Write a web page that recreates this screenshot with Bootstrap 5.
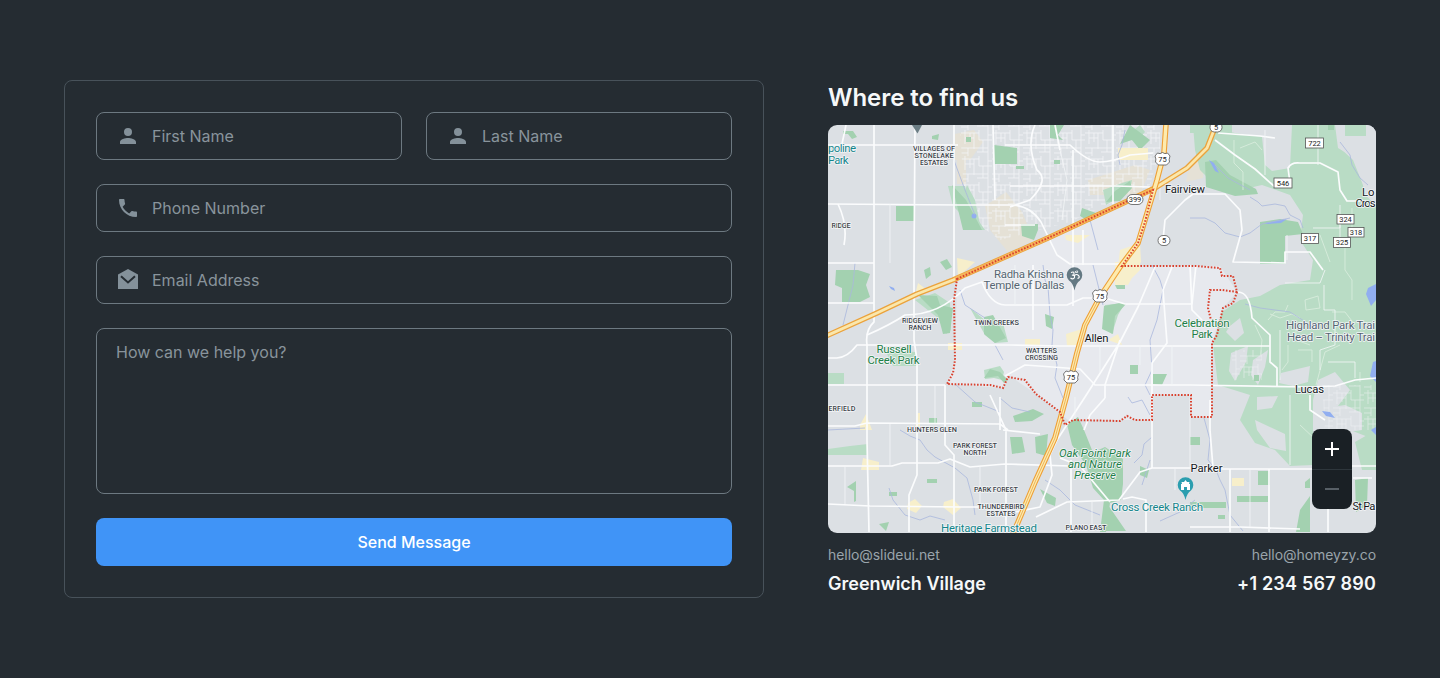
<!DOCTYPE html>
<html lang="en">
<head>
<meta charset="utf-8">
<meta name="viewport" content="width=device-width, initial-scale=1">
<title>Contact</title>
<link href="https://cdn.jsdelivr.net/npm/bootstrap@5.3.0/dist/css/bootstrap.min.css" rel="stylesheet">
<style>
body{background:#252c32;color:#f6f8f9;font-family:Inter,"Liberation Sans",sans-serif;font-size:16px;line-height:24px}
.contact-wrap{padding:80px 64px;gap:64px}
.contact-form{width:700px;height:518px;padding:31px;border:1px solid #48525a;border-radius:8px;gap:24px}
.field{height:48px;border:1px solid #6d7981;border-radius:8px;padding:0 19px;gap:12px}
.field svg{width:24px;height:24px;fill:#84919a;flex:none}
.form-control,.form-control:focus{background:transparent;border:0;border-radius:0;box-shadow:none;color:#f6f8f9;padding:0;font-size:16px;line-height:24px}
.form-control::placeholder{color:#89949c;opacity:1}
textarea.form-control,textarea.form-control:focus{height:166px;border:1px solid #6d7981;border-radius:8px;padding:11px 19px;resize:none}
.btn-send,.btn-send:hover{height:48px;background:#4094f7;color:#fff;border:0;border-radius:8px;font-weight:500;font-size:16px}
.place{width:548px}
.place h1{font-size:24px;line-height:36px;font-weight:600;letter-spacing:-.04px;margin:0 0 9px}
.map-frame{height:408px;border-radius:9px;overflow:hidden}
.map-frame svg.map{display:block;width:548px;height:408px}
.zoom-box{position:absolute;right:24px;bottom:24px;width:40px;height:80px;border-radius:8px;background:#1a2025;overflow:hidden}
.zoom-box button{height:40px;width:40px;background:none;border:0;padding:0}
.zoom-box button+button{box-shadow:inset 0 1px #2e363c}
.mail{font-size:14px;line-height:20px;letter-spacing:-.06px;color:#9aa4ab;margin-top:12px}
.strong-line{font-size:18px;line-height:28px;font-weight:600;margin-top:5px}
.tel{letter-spacing:.2px}
/* map drawing */
.map text{font-family:Roboto,"Liberation Sans",sans-serif;paint-order:stroke;stroke:#f3f5f7;stroke-width:1.6px;stroke-linejoin:round;text-anchor:middle}
.hood{font-size:7.3px;font-weight:500;fill:#3d434a}
.town{font-size:11.3px;fill:#15181b;font-weight:400}
.park{font-size:11.5px;fill:#1e8049}
.teal{font-size:11.5px;fill:#14858b}
.poi{font-size:11.5px;fill:#566572}
.map .shield text{font-size:7.5px;font-weight:400;fill:#222;stroke:none}
.shield rect{fill:#fff;stroke:#555;stroke-width:.8}
.g1{fill:#b9dcc5}.g2{fill:#a3d1b0}
.road{fill:none;stroke:#fbfcfd;stroke-width:1.7;stroke-linejoin:round}
.lane{fill:none;stroke:#f4f6f8;stroke-width:.8}
.trail{fill:none;stroke:#d8ecdd;stroke-width:.9;stroke-linejoin:round}
.creek{fill:none;stroke:#a9b7dd;stroke-width:.8;stroke-linejoin:round}
.edge{fill:none;stroke:#d9412e;stroke-width:2;stroke-dasharray:1.6 1.6}
</style>
</head>
<body>
<main class="contact-wrap d-flex align-items-start">
  <form class="contact-form d-flex flex-column">
    <div class="d-flex gap-4">
      <div class="field d-flex align-items-center flex-fill">
        <svg viewBox="0 0 24 24"><path d="M12 12a4 4 0 1 0 0-8 4 4 0 0 0 0 8zm0 2c-2.670 0-8 1.340-8 4v2h16v-2c0-2.660-5.330-4-8-4z"/></svg>
        <input class="form-control" placeholder="First Name" aria-label="First Name">
      </div>
      <div class="field d-flex align-items-center flex-fill">
        <svg viewBox="0 0 24 24"><path d="M12 12a4 4 0 1 0 0-8 4 4 0 0 0 0 8zm0 2c-2.670 0-8 1.340-8 4v2h16v-2c0-2.660-5.330-4-8-4z"/></svg>
        <input class="form-control" placeholder="Last Name" aria-label="Last Name">
      </div>
    </div>
    <div class="field d-flex align-items-center">
      <svg viewBox="0 0 24 24"><path d="M6.620 10.790c1.440 2.830 3.760 5.140 6.590 6.590l2.200-2.200c.27-.27.67-.36 1.020-.24 1.120.37 2.330.57 3.570.57.55 0 1 .45 1 1V20c0 .55-.45 1-1 1-9.390 0-17-7.610-17-17 0-.55.45-1 1-1h3.500c.55 0 1 .45 1 1 0 1.250.2 2.450.57 3.570.11.35.03.74-.25 1.020l-2.200 2.200z"/></svg>
      <input class="form-control" placeholder="Phone Number" aria-label="Phone Number">
    </div>
    <div class="field d-flex align-items-center">
      <svg viewBox="0 0 24 24"><path d="M2 6.500 12 1l10 5.500V21H2z"/><path d="m5 8.200 7 6.200 7-6.200" fill="none" stroke="#252c32" stroke-width="2"/></svg>
      <input class="form-control" placeholder="Email Address" aria-label="Email Address">
    </div>
    <textarea class="form-control" placeholder="How can we help you?" aria-label="Message"></textarea>
    <button type="button" class="btn btn-send w-100">Send Message</button>
  </form>

  <section class="place">
    <h1>Where to find us</h1>
    <div class="map-frame position-relative">
      <svg class="map" viewBox="828 125 548 408">
        <defs>
          <pattern id="streets" width="31" height="26" patternUnits="userSpaceOnUse"><path d="M0 3h18M4 0v14M9 3v9M13 3v16M4 8h9M18 0v10h13M22 10v12M27 0v26M0 18h27M7 18v8M16 22h11M0 23h7M27 5h4" fill="none" stroke="#f3f4f6" stroke-width=".8"/></pattern>
        </defs>
        <rect x="828" y="125" width="548" height="408" fill="#dce0e4"/>
        <path fill="#e7e9ee" d="M957 279 1153 190 1140 240 1122 266H1220L1237 292 1223 308 1212 343V417H1191V395H1152V420H1068L1036 394 1010 376 1003 388 947 384 955 360z"/>
        <path fill="#e5e1d6" d="M955 134 974 130 983 142 970 160 955 160zM957 160H966V184H957zM985 206 1006 192 1022 212 1034 240 1008 252 990 230zM1088 180 1135 165 1150 170 1140 195 1090 195zM1190 160 1206 150 1203 178 1186 182z"/>
        <path fill="url(#streets)" d="M960 125H1160V150L1150 185 1070 222 1000 240 965 215z"/>
        <path class="g1" d="M1193 125 1235 133 1262 137 1265 165 1272 171 1290 168 1292 125H1335L1338 148 1358 160 1365 195 1376 205V440L1350 430 1335 410 1350 390 1335 372 1318 380 1313 400V465L1290 466 1275 450 1255 443 1240 420 1250 395 1218 385 1213 345 1222 312 1240 300 1260 296 1280 285 1310 280 1313 260 1300 240 1303 215 1290 195 1262 185 1240 190 1215 185 1200 170 1195 150z"/>
        <path class="g2" d="M1205 162 1216 160 1230 175 1256 189 1258 194 1235 196 1206 187zM1260 222 1280 219 1298 222 1303 234 1285 236V262H1260zM1260 260H1285V264H1260z"/>
        <path class="trail" d="M1234 140V163L1243 172V190M1240 148 1255 142 1262 150M1270 314 1280 318 1292 314 1300 318M1268 320 1275 312H1285L1288 305M1305 300 1318 296 1320 308 1306 310zM1288 345V362L1282 370M1298 350H1312V362M1316 385 1325 352 1340 345M1332 312H1345L1355 325M1300 425 1316 440V455M1313 330 1320 322M1345 238V270L1352 280V300M1320 235 1330 262M1296 325V340L1310 345M1255 325 1262 340 1260 360M1360 372V382M1352 208V230"/>
        <path fill="#dce0e4" d="M1230 326 1240 318 1244 333 1235 341 1226 332zM1231 353 1248 346 1246 362 1235 381 1229 371zM1253 360 1268 350 1265 367 1258 385 1251 375zM1281 373 1310 366 1308 382 1293 386 1279 383zM1255 420 1285 434 1286 451 1270 448 1257 430zM1257 397 1278 396 1272 408 1257 410zM1325 408 1345 405 1362 413 1362 430 1330 435zM1340 125H1376V195L1365 190 1353 160 1340 148z"/>
        <path fill="url(#streets)" opacity=".6" d="M1322 385H1376V430H1325zM1232 350H1262V380H1232z"/>
        <g class="g1">
          <path d="M948 186 965 186 970 207 978 220 985 230H970L962 215 953 206z"/>
          <path d="M967 185 975 200 980 225 975 230 962 200zM915 300 935 293 950 303 951 330 946 334 938 318zM885 350 915 352 918 366H893zM1105 305 1125 303 1118 315 1112 334 1103 328zM1103 190 1125 182 1132 180 1130 190 1106 205zM1140 125 1145 132 1136 142 1125 137zM1190 125H1232V133H1190z"/>
          <path d="M828 449 850 446 868 444V455H828zM828 373H844V384H828zM984 370 1000 366 1004 372 1002 380 994 378 985 379zM1345 125H1366V136H1345zM1355 442 1376 430V470H1362z"/>
          <path d="M970 308 985 320 990 325 1003 323 1008 342 995 343 985 335z"/>
        </g>
        <g class="g2">
          <path d="M836 270 858 270 870 274 866 285 870 297 860 302H842V288L835 285zM896 206H914V221H896zM918 295 937 296 940 305 953 308 950 333 943 334 938 315zM963 230 952 185 966 200 982 230zM994 145 1017 148V164H994z"/>
          <path d="M1067 424 1078 417 1084 430 1092 450 1094 452 1105 447 1123 459V484L1121 500 1110 503 1106 532H1100L1104 500 1093 488 1086 465 1072 445zM1106 502 1126 531H1102z"/>
          <path d="M1104 306 1120 303 1126 304 1115 316 1113 334 1102 329zM984 317 993 315 1006 338 995 343 984 334zM1115 191 1130 181 1132 188 1120 201 1106 202zM1010 437H1022L1025 452 1012 454zM1035 437 1048 434 1046 456 1036 453zM1013 416 1033 409 1044 414 1032 421 1015 422zM1000 372 990 369 984 378 998 376 1004 383 1008 380zM1050 125H1064L1058 135 1063 140 1050 138zM1021 224H1038V230L1034 240 1022 236zM1130 125 1150 140 1140 150 1132 140 1120 144zM1082 208 1096 213 1090 222 1080 216zM1130 365H1138V374H1130zM1153 374 1167 374 1162 385 1153 384zM847 487 856 481V501L854 502V491zM879 524 889 522 886 531zM1190 437H1200V445H1190zM1258 471H1270V485H1258zM1237 496H1268V502H1237zM1190 502H1226V508H1190zM1300 510 1310 496V532H1296zM1355 480 1368 478 1367 505 1356 512z"/>
          <path d="M843 131h10l4 6-5 2-4-5h-5zM932 136l7-2-1 6-6-1zM924 270l6-3 1 8-5 4zM940 262l7-3 5 8-6 3zM929 418h8v5h-8zM927 479h10v4h-10zM889 492h8v4h-8zM972 402h10v5h-10zM1045 314l9 3-2 12-6-3zM1140 466l9 4-2 8-7-3zM1040 489l16 9-1 8-8-3zM1218 515h7v4h-7zM966 137h5v5h-5zM1115 285h10v4h-8zM1254 375h5v6h-5zM1016 166h8v3h-8zM1054 160h6v4h-6zM1305 482l5-4v10h-5zM1328 125h6v5h-6z"/>
        </g>
        <path fill="#f7efcb" d="M1120 250 1140 243 1141 262 1128 285 1116 283zM1115 262H1140V270L1125 285H1115zM1066 334 1085 328 1082 345 1067 346zM1118 334 1122 345 1108 340zM1025 339H1040V346H1025zM1065 235H1090L1078 243 1066 240zM1120 250H1140V268H1120zM860 425 866 414 872 430H860zM863 458 879 462V470H861zM908 503 915 499 922 506 916 513 907 509zM944 502 953 499 961 508 953 515 943 507zM957 258 975 262 958 277zM1232 478H1244V486H1232zM948 343H962V350H948zM918 283 927 290 915 295zM1118 148H1148V160H1118zM917 413H920V430H915z"/>
        <g fill="#91aef0"><circle cx="974" cy="216" r="2.500"/><path d="M1368 288 1376 284V300L1371 306 1366 294zM1370 376 1373 362 1376 361V382zM1322 411l8 1 5 6-9-2zM1265 223l22-4-6 4-14 1zM1209 160l5 3 5 10-4-2zM889 286l5 2 1 3-4-2zM1371 430l5-3v8z"/></g>
        <path class="creek" d="M855 263 853 285 843 325M828 430 865 428M900 430 910 436 920 440 927 450 935 457 955 468 967 478 973 500 975 515M889 488 893 500 905 515 920 520 930 516 945 520M1043 265 1045 280 1048 287 1050 315 1053 330 1052 345 1057 365 1055 378 1063 398M1093 265 1103 305M1128 397 1132 403 1142 400 1150 415M1152 437 1144 444 1142 455 1134 463M1152 265 1160 280 1163 290 1157 320 1150 340 1152 370 1145 385 1150 395M1190 218 1205 218 1215 223 1225 233 1240 237 1250 233 1262 224 1290 218M1250 197 1258 202 1262 206 1275 204 1285 206 1290 215 1300 220 1303 228M1204 418 1210 440 1208 460 1216 470 1220 480 1225 490 1230 515 1243 531M952 155 965 190 975 215M1125 130 1122 145 1118 155 1120 165M1090 220 1098 250M960 290 965 305 985 318M995 345 1003 360M1150 460 1142 485M1045 480 1060 490 1075 505 1100 515M1245 304 1260 308 1290 312 1312 326M1340 142 1350 155 1352 165 1360 178 1368 185M1195 500 1180 512 1160 521M1215 165 1228 178 1250 190M1000 398 1012 408 1030 412M955 384 975 402 1000 412"/>
        <g class="road">
          <path d="M828 145H958M1005 145H1070Q1088 162 1100 162T1130 155L1153 153M828 204 960 205H1010Q1030 205 1041 222L1057 255 1070 264H1122M828 263H874M828 303H874M1010 186H1115L1150 187M1005 225H1035"/>
          <path d="M828 358H837Q848 357 857 345H1010L1060 346H1270M828 385H945M1005 376 1025 365 1080 369 1095 385H1190L1310 387 1335 386 1355 380 1376 378"/>
          <path d="M828 426H855L867 423 1000 424 1008 430M828 466H892L902 463H938L950 459 970 467 1005 464 1070 466M828 504 870 506 960 507 1000 507"/>
          <path d="M874 125V322Q865 330 867 345V440L869 532M915 125 914 265V340L917 360V475L909 495V532M954 125V280M945 385V445L954 455V532M993 125 995 200"/>
          <path d="M846 125 842 144M838 204Q848 225 844 245M867 335Q890 325 905 315 940 315 965 288L982 282Q990 304 1005 305M1005 305H1067L1083 298H1105L1125 304H1192L1196 265M1033 265V330M1073 150V306M1083 230V265M1113 125V204"/>
          <path d="M1155 267 1138 307 1120 342 1085 397 1057 440 1050 455 1052 475 1040 507 1000 515M1172 267 1163 290 1167 343 1152 363V468H1200M1152 468 1140 472 1119 500 1067 502 1036 517M1110 502 1080 466 1060 458M1071 460V532M1084 430 1090 415 1105 398M1105 398V385L1120 340"/>
          <path d="M1000 397V430M990 395 1006 430V532M1055 125 1060 150M1035 125Q1026 145 1037 170 1050 180 1030 200L1010 207M1003 430 1040 434M1123 499 1132 497 1146 500V532"/>
          <path d="M1163 240 1165 220 1185 200 1193 194H1225L1240 210 1242 230 1233 262 1285 263V252H1310L1323 270M1215 140 1235 155 1255 169 1275 187M1290 183 1288 168Q1291 162 1300 163H1320L1338 172 1340 190 1347 201H1360M1218 133 1260 136 1275 138"/>
          <path d="M1190 265 1192 310 1202 320M1238 292Q1250 292 1252 318L1270 335V362L1277 368V387M1312 466H1376M1200 469H1312M1230 469V532M1269 469V532M1190 527H1240L1300 529M1328 509V532M1210 400V430L1213 468M1353 478H1372M1310 395V410L1325 420"/>
        </g>
        <g class="lane"><path d="M1265 130V175M1318 125V165M1340 237V205M1313 228H1340V222M1287 235V260M1285 283H1320L1325 270M1324 285V310H1335V345L1320 350V370M1328 362H1355V378M1290 395V465M1280 330V380M1160 180V200M1075 397V420M1060 150 1067 180 1062 220M890 204V263M845 466V504M1172 345V385M1190 395V469M935 385V424M890 424V466M1100 346V372M980 466V507M1015 265V305M1175 469V490M1092 502V525M1250 469V527M1140 345V365"/></g>
        <g fill="none" stroke-linejoin="round">
          <path d="M826 336 877 313 917 294 953 280 1005 257 1048 238 1132 199 1155 188 1187 168 1207 148 1216 125" stroke="#eba23b" stroke-width="5.400"/>
          <path d="M826 336 877 313 917 294 953 280 1005 257 1048 238 1132 199 1155 188 1187 168 1207 148 1216 125" stroke="#fae7ac" stroke-width="2.800"/>
          <path d="M955 279 1005 257 1048 238 1132 199 1152 190" stroke="#f5b45b" stroke-width="4"/>
          <path d="M1166 124 1164 153 1157 180 1152 197 1145 220 1138 243 1120 267 1100 297 1085 325 1077 353 1066 398 1055 438 1035 482 1013 534" stroke="#ee9f35" stroke-width="5.600"/>
          <path d="M1166 124 1164 153 1157 180 1152 197 1145 220 1138 243 1120 267 1100 297 1085 325 1077 353 1066 398 1055 438 1035 482 1013 534" stroke="#fdebae" stroke-width="3.400"/>
          <path d="M1100 297 1085 325 1077 353 1066 398 1055 438 1035 482 1013 534" stroke="#e9a646" stroke-width=".8"/>
        </g>
        <path class="edge" d="M957 279 1005 257 1048 238 1132 199 1153 190 1145 222 1138 243 1122 266H1195L1220 268 1222 276H1233L1237 292 1233 303 1223 308 1217 335 1212 343V417H1191V395H1152V420H1135L1127 416 1120 421 1073 420 1065 425 1060 412 1036 394 1025 380 1008 377 1003 388 990 385 947 384 953 373 955 360 954 300z"/>
        <path class="edge" d="M1237 292 1222 290H1210L1208 308 1211 320"/>

        <g class="shield">
          <g id="interstate"><path d="M1157.500 153q2.500 1.500 5-.5 2.500 2 5 .5l2.500 3q-1.500 4-.5 6l-3 3h-8l-3-3q1-3-.5-6z" fill="#fff" stroke="#555" stroke-width=".8"/><text x="1162.500" y="161.500">75</text></g>
          <use href="#interstate" x="-62.500" y="137"/><use href="#interstate" x="-91.500" y="218"/>
          <rect x="1127" y="194.500" width="16" height="10" rx="5"/><text x="1135" y="202">399</text>
          <rect x="1158" y="235.500" width="12" height="10" rx="5"/><text x="1164" y="243.200">5</text>
          <rect x="1210" y="122.500" width="12" height="9.500" rx="4.500"/><text x="1216" y="130">5</text>
          <rect x="1305.500" y="138" width="18" height="10"/><text x="1314.500" y="145.700">722</text>
          <rect x="1274" y="178" width="18" height="10"/><text x="1283" y="185.700">546</text>
          <rect x="1337" y="214.500" width="17" height="9.500"/><text x="1345.500" y="222">324</text>
          <rect x="1348" y="227.500" width="16" height="9.500"/><text x="1356" y="235">318</text>
          <rect x="1301.500" y="233.500" width="17" height="10"/><text x="1310" y="241.200">317</text>
          <rect x="1333.500" y="237.500" width="17" height="10"/><text x="1342" y="245.200">325</text>
        </g>
        <path d="M912 125H922L917.500 133.500z" fill="#6b7d84"/>
        <path d="M1074.500 290.500Q1073 283 1069 280.500A7.800 7.800 0 1 1 1080 280.500Q1076 283 1074.500 290.500z" fill="#647983"/>
        <path d="M1071 272.500q3-1.500 3 1t-2 1.500q3 0 2.500 2.500-1.500 2.500-4 .5M1074.500 275.500q2-2 4 0t-1 3M1075 271.500q1.500 1.500 3 0M1077 270v.5" fill="none" stroke="#fff" stroke-width="1.100"/>
        <path d="M1185.500 500Q1184 493 1180 490.500A7.800 7.800 0 1 1 1191 490.500Q1187 493 1185.500 500z" fill="#2b9eaf"/>
        <path d="M1181 490V484H1182L1181.500 482H1184L1185.500 480 1187 482H1189.500L1189 484H1190V490H1187V487H1184V490z" fill="#fff"/>

        <g class="hood">
          <text x="934" y="150.500" textLength="42">VILLAGES OF</text><text x="934" y="157.500" textLength="39">STONELAKE</text><text x="934" y="164.500" textLength="28">ESTATES</text>
          <text x="841" y="227.500" textLength="19">RIDGE</text>
          <text x="920" y="322.700" textLength="36">RIDGEVIEW</text><text x="920" y="329.700" textLength="23">RANCH</text>
          <text x="996.500" y="324.800" textLength="45">TWIN CREEKS</text>
          <text x="1041.500" y="352.800" textLength="31">WATTERS</text><text x="1041.500" y="359.800" textLength="33">CROSSING</text>
          <text x="842" y="411.200" textLength="27">ERFIELD</text><text x="932" y="431.500" textLength="50">HUNTERS GLEN</text>
          <text x="975" y="448.300" textLength="44">PARK FOREST</text><text x="975" y="455.300" textLength="23">NORTH</text>
          <text x="996" y="492.200" textLength="44">PARK FOREST</text>
          <text x="1001" y="509.300" textLength="47">THUNDERBIRD</text><text x="1001" y="516.300" textLength="29">ESTATES</text>
          <text x="1086" y="530.300" textLength="41">PLANO EAST</text>
        </g>
        <g class="town">
          <text x="1185" y="193.300" textLength="40">Fairview</text><text x="1096.500" y="342" textLength="24">Allen</text>
          <text x="1309.500" y="393" textLength="29">Lucas</text><text x="1206.500" y="472" textLength="32">Parker</text>
          <text style="text-anchor:start" x="1362" y="196">Lo</text><text style="text-anchor:start" x="1355.500" y="207" textLength="20">Cros</text>
          <text style="text-anchor:start" x="1352.500" y="510" textLength="23">St Pa</text>
        </g>
        <g class="park">
          <text x="894" y="353" textLength="35">Russell</text><text x="893.500" y="363.800" textLength="52">Creek Park</text>
          <text x="1202" y="327.300" textLength="55">Celebration</text><text x="1202" y="338.300" textLength="21">Park</text>
          <g font-style="italic"><text x="1095" y="457" textLength="72">Oak Point Park</text><text x="1095" y="468" textLength="54">and Nature</text><text x="1095" y="479" textLength="42">Preserve</text></g>
        </g>
        <g class="teal">
          <text style="text-anchor:start" x="828" y="152.300" textLength="28">poline</text><text style="text-anchor:start" x="828" y="163.500" textLength="20.500">Park</text>
          <text x="1157" y="511" textLength="92">Cross Creek Ranch</text><text x="989" y="531.500" textLength="96">Heritage Farmstead</text>
        </g>
        <g class="poi">
          <text x="1029" y="277.500" textLength="70">Radha Krishna</text><text x="1024" y="288.700" textLength="81">Temple of Dallas</text>
          <text style="text-anchor:start" x="1286" y="328.500" textLength="89">Highland Park Trai</text><text style="text-anchor:start" x="1287" y="340.500" textLength="88">Head – Trinity Trai</text>
        </g>
      </svg>
      <div class="zoom-box d-flex flex-column">
        <button type="button" aria-label="Zoom in"><svg class="d-block mx-auto" width="16" height="16" viewBox="0 0 16 16"><path d="M8 1v14M1 8h14" stroke="#fff" stroke-width="2"/></svg></button>
        <button type="button" aria-label="Zoom out"><svg class="d-block mx-auto" width="16" height="16" viewBox="0 0 16 16"><path d="M1 8h14" stroke="#6c757c" stroke-width="1.500"/></svg></button>
      </div>
    </div>
    <div class="mail d-flex justify-content-between"><span>hello@slideui.net</span><span>hello@homeyzy.co</span></div>
    <div class="strong-line d-flex justify-content-between"><span>Greenwich Village</span><span class="tel">+1 234 567 890</span></div>
  </section>
</main>
<script src="https://cdn.jsdelivr.net/npm/bootstrap@5.3.0/dist/js/bootstrap.bundle.min.js"></script>
</body>
</html>
